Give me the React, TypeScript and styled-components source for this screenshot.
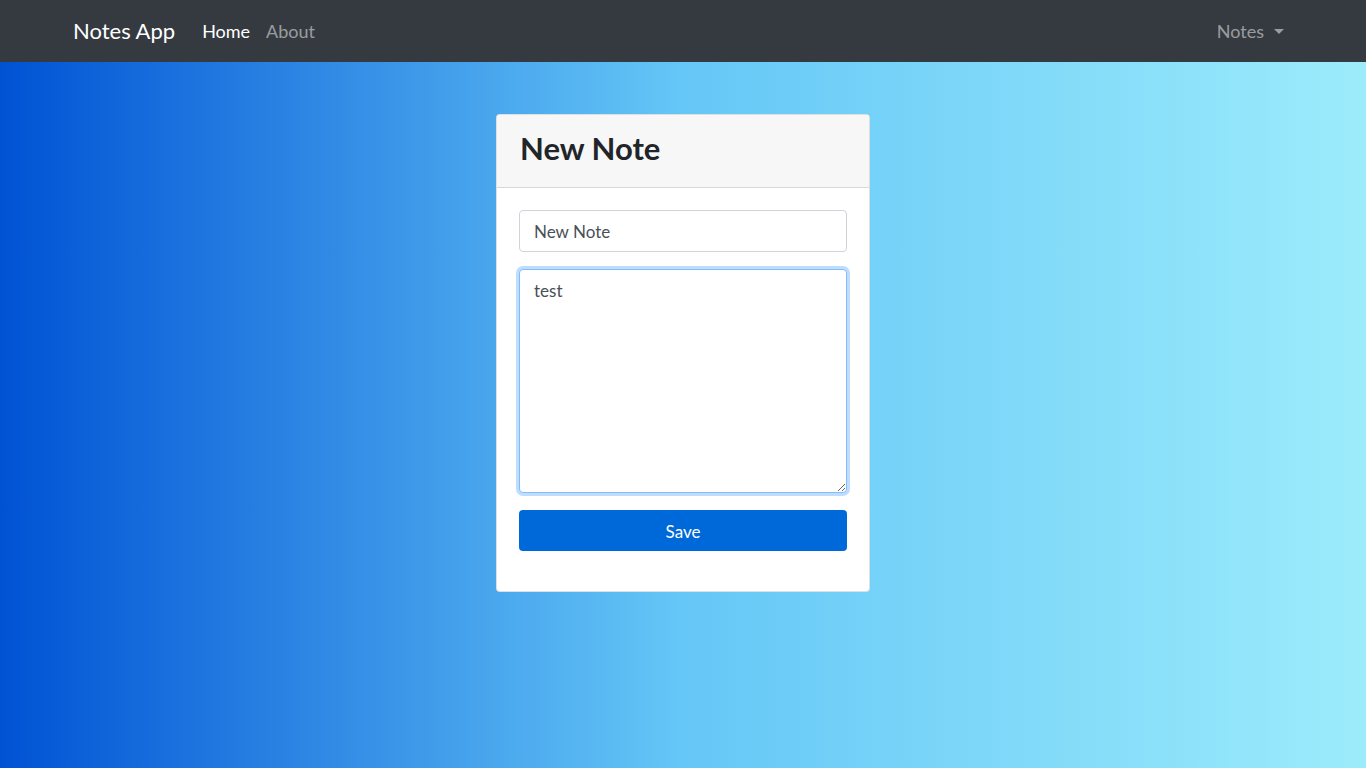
import React from "react";
import styled, { createGlobalStyle } from "styled-components";

const Global = createGlobalStyle`
  html, body { margin: 0; padding: 0; }
  body {
    font-family: Lato, "Open Sans", sans-serif;
    font-size: 16px;
    line-height: 1.5;
    color: #212529;
  }
  * { box-sizing: border-box; }
`;

const Page = styled.div`
  min-height: 768px;
  display: flex;
  flex-direction: column;
  background: linear-gradient(to right, #0052d4, #65c7f7, #9cecfb);
`;

const NavBar = styled.nav`
  height: 62px;
  background: #343a40;
  display: flex;
  align-items: center;
  padding: 0 74px 0 73px;
`;

const Brand = styled.a`
  color: #fff;
  font-size: 22px;
  margin-right: 19px;
  text-decoration: none;
  line-height: 30px;
`;

const NavLinks = styled.div`
  display: flex;
  flex: 1;
`;

const NavLink = styled.a<{ $active?: boolean }>`
  color: ${(p) => (p.$active ? "#fff" : "rgba(255,255,255,0.5)")};
  padding: 8px;
  font-size: 18px;
  text-decoration: none;
  line-height: 27px;
`;

const Dropdown = styled.a`
  color: rgba(255,255,255,0.5);
  padding: 8px;
  font-size: 18px;
  line-height: 27px;
  display: flex;
  align-items: center;
  text-decoration: none;
`;

const Caret = styled.span`
  display: inline-block;
  margin-left: 10px;
  border-top: 5px solid rgba(255,255,255,0.5);
  border-left: 5px solid transparent;
  border-right: 5px solid transparent;
`;

const Main = styled.main`
  display: flex;
  justify-content: center;
  padding-top: 52px;
`;

const Card = styled.div`
  width: 374px;
  background: #fff;
  border: 1px solid rgba(0,0,0,0.125);
  border-radius: 4px;
  overflow: hidden;
`;

const CardHeader = styled.div`
  background: #f7f7f7;
  border-bottom: 1px solid rgba(0,0,0,0.125);
  padding: 9px 23px;
  height: 73px;
`;

const Title = styled.h2`
  margin: 0;
  font-size: 31px;
  font-weight: 700;
  line-height: 48px;
  color: #212529;
`;

const Form = styled.form`
  padding: 22px 22px 40px;
  display: flex;
  flex-direction: column;
`;

const Input = styled.input`
  height: 42px;
  border: 1px solid #ced4da;
  border-radius: 4px;
  padding: 6px 14px;
  font-family: inherit;
  font-size: 17px;
  color: #495057;
  margin-bottom: 17px;
  outline: none;
`;

const TextArea = styled.textarea`
  height: 224px;
  border: 1px solid #80bdff;
  border-radius: 4px;
  padding: 10px 14px;
  font-family: inherit;
  font-size: 17px;
  color: #495057;
  box-shadow: 0 0 0 3px rgba(0,123,255,0.25);
  margin-bottom: 17px;
  outline: none;
  resize: vertical;
`;

const Button = styled.button`
  height: 41px;
  border: none;
  border-radius: 4px;
  background: #0069d9;
  color: #fff;
  font-family: inherit;
  font-size: 17px;
  padding-top: 2px;
  cursor: pointer;
`;

export default function App() {
  return (
    <>
      <Global />
      <Page>
        <NavBar>
          <Brand href="#">Notes App</Brand>
          <NavLinks>
            <NavLink $active href="#">Home</NavLink>
            <NavLink href="#">About</NavLink>
          </NavLinks>
          <Dropdown href="#">
            Notes<Caret />
          </Dropdown>
        </NavBar>
        <Main>
          <Card>
            <CardHeader>
              <Title>New Note</Title>
            </CardHeader>
            <Form onSubmit={(e) => e.preventDefault()}>
              <Input defaultValue="New Note" />
              <TextArea defaultValue="test" />
              <Button type="submit">Save</Button>
            </Form>
          </Card>
        </Main>
      </Page>
    </>
  );
}
